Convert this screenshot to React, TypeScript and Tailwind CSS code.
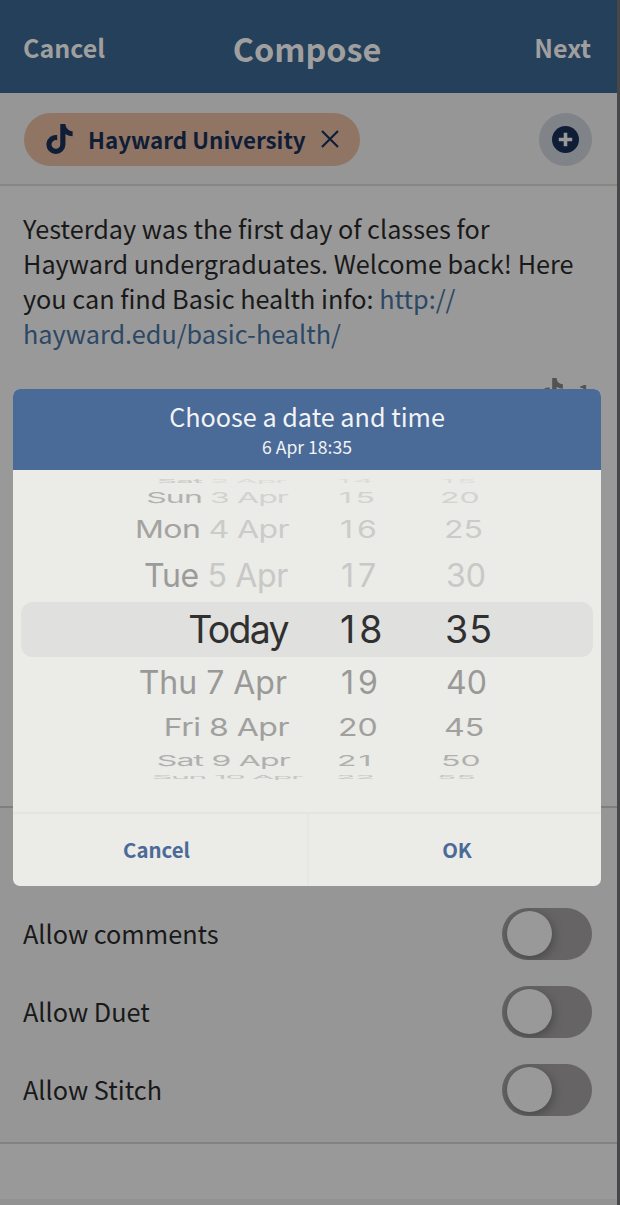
import clsx from "clsx";
import { FaTiktok } from "react-icons/fa6";

const wheelRows = [
  { day: "Sat", date: "2 Apr", hour: "14", minute: "15", height: "h-[6px]", squash: "scale-y-[0.17]", tracking: "tracking-[-1.2px]", dayColor: "text-[#c9c9c7]", color: "text-[#dcdcda]", dateShift: "mr-[3px]", hourShift: "-ml-[2px] tracking-[3px]", minuteShift: "-ml-[5px] tracking-[3px]" },
  { day: "Sun", date: "3 Apr", hour: "15", minute: "20", height: "h-[27px]", squash: "scale-y-[0.47]", tracking: "tracking-[-0.9px]", dayColor: "text-[#b2b2b0]", color: "text-[#d2d2d0]", dateShift: "mr-px", hourShift: "tracking-[3.5px]", minuteShift: "-ml-[6px]" },
  { day: "Mon", date: "4 Apr", hour: "16", minute: "25", height: "h-[38px]", squash: "scale-y-[0.77]", tracking: "tracking-[-0.6px]", dayColor: "text-[#a3a3a2]", color: "text-[#cbcbc9]", dateShift: "", hourShift: "ml-px tracking-[4px]", minuteShift: "-ml-[2px]" },
  { day: "Tue", date: "5 Apr", hour: "17", minute: "30", height: "h-[53px]", squash: "", tracking: "tracking-[-0.35px]", dayColor: "text-[#9b9b9a]", color: "text-[#c8c8c6]", dateShift: "mr-px", hourShift: "ml-[2px] tracking-[4px]", minuteShift: "" },
  { day: "Today", date: "", hour: "18", minute: "35", height: "h-[55px]", squash: "", tracking: "tracking-[-1.7px]", dayColor: "text-[#303030]", color: "text-[#303030]", dateShift: "mr-px", hourShift: "ml-px tracking-[4px]", minuteShift: "-ml-px tracking-[1px]" },
  { day: "Thu", date: "7 Apr", hour: "19", minute: "40", height: "h-[51px]", squash: "", tracking: "", dayColor: "text-[#999998]", color: "text-[#999998]", dateShift: "mr-[2px]", hourShift: "ml-[2px] tracking-[4px]", minuteShift: "" },
  { day: "Fri", date: "8 Apr", hour: "20", minute: "45", height: "h-[40px]", squash: "scale-y-[0.77]", tracking: "tracking-[-0.5px]", dayColor: "text-[#a0a09f]", color: "text-[#a0a09f]", dateShift: "", hourShift: "-ml-px", minuteShift: "-ml-[2px]" },
  { day: "Sat", date: "9 Apr", hour: "21", minute: "50", height: "h-[25px]", squash: "scale-y-[0.47]", tracking: "tracking-[-0.8px]", dayColor: "text-[#b0b0ae]", color: "text-[#b0b0ae]", dateShift: "-mr-px", hourShift: "-ml-[2px] tracking-[2px]", minuteShift: "-ml-[5px]" },
  { day: "Sun", date: "10 Apr", hour: "22", minute: "55", height: "h-[8px]", squash: "scale-y-[0.17]", tracking: "tracking-[-1.3px]", dayColor: "text-[#c6c6c4]", color: "text-[#c6c6c4]", dateShift: "-mr-[13px]", hourShift: "-ml-[3px]", minuteShift: "-ml-[9px]" },
];

const options = ["Allow comments", "Allow Duet", "Allow Stitch"];

function Toggle() {
  return (
    <div className="h-[52px] w-[90px] overflow-hidden rounded-full bg-[#666465] py-[3px] pl-[5px]">
      <div className="size-[45px] rounded-full bg-[#999] shadow-[1px_3px_8px_1px_rgba(60,60,60,0.6)]" />
    </div>
  );
}

function WheelRow({ row }: { row: (typeof wheelRows)[number] }) {
  const selected = row.day === "Today";

  return (
    <div
      className={clsx(
        "flex shrink-0 items-center whitespace-nowrap font-['Inter',sans-serif]",
        row.height,
        selected
          ? "rounded-[12px] bg-[#e0e0df] text-[37.5px] leading-[54px]"
          : "text-[32px] leading-[40px]",
        row.color,
      )}
    >
      <div className="flex w-[268px] shrink-0 justify-end">
        <span className={clsx("block whitespace-pre", row.squash, row.tracking, row.dateShift)}>
          <span className={row.dayColor}>{row.day}</span>
          {row.date && ` ${row.date}`}
        </span>
      </div>
      <div className="flex w-[105px] shrink-0 pl-[50px]">
        <span className={clsx("block", row.squash, row.hourShift)}>{row.hour}</span>
      </div>
      <div className="flex pl-[52px]">
        <span className={clsx("block", row.squash, row.minuteShift)}>{row.minute}</span>
      </div>
    </div>
  );
}

function DateTimeDialog() {
  return (
    <div className="absolute top-[389px] left-[13px] flex h-[497px] w-[588px] flex-col overflow-hidden rounded-[7px] bg-[#ebebe7]">
      <div className="flex h-[81px] flex-col items-center bg-[#4a6a98] pt-[10px] text-[#f2f3f5]">
        <h2 className="text-[25.2px] leading-[34px]">Choose a date and time</h2>
        <p className="mt-px text-[17.6px] leading-[26px]">6 Apr 18:35</p>
      </div>

      <div className="flex h-[342px] flex-col px-[8px] pt-[8px]">
        {wheelRows.map((row) => (
          <WheelRow key={row.day + row.date} row={row} />
        ))}
      </div>

      <div className="grid flex-1 grid-cols-[296px_1fr] border-t-2 border-[#e4e4e1] pb-px text-[20.4px] font-bold text-[#4a6a98]">
        <button className="border-r-2 border-[#e6e6e3] pr-[7px]">Cancel</button>
        <button className="pl-[4px]">OK</button>
      </div>
    </div>
  );
}

export default function App() {
  return (
    <div className="relative h-[1205px] w-[620px] overflow-hidden border-r-[3px] border-[#47474a] bg-[#999] font-['Noto_Sans_CJK_SC',sans-serif] text-[#191919]">
      <header className="grid h-[93px] grid-cols-[1fr_auto_1fr] items-center bg-[#25405a] pt-[3px] pr-[26px] pl-[23px] text-[25px] font-bold text-[#a09f9f]">
        <span>Cancel</span>
        <h1 className="text-[32.4px]">Compose</h1>
        <span className="text-right">Next</span>
      </header>

      <div className="flex h-[93px] items-center justify-between border-b-2 border-[#868683] bg-[#969696] pt-px pr-[25px] pl-[24px]">
        <div className="flex h-[53px] w-[336px] items-center rounded-full bg-[#907565] pl-[22px] text-[#101d36]">
          <FaTiktok className="h-[30px] w-[27px]" />
          <span className="ml-[15px] w-[218px] text-[22.4px] leading-[36px] font-bold whitespace-nowrap">Hayward University</span>
          <svg className="ml-[15px] size-[18px]" viewBox="0 0 18 18" fill="none" stroke="currentColor" strokeWidth="2.2">
            <path d="M1 1l16 16M17 1L1 17" />
          </svg>
        </div>
        <div className="flex size-[53px] items-center justify-center rounded-full bg-[#808388]">
          <svg className="size-[27px]" viewBox="0 0 27 27">
            <circle cx="13.5" cy="13.5" r="13.5" fill="#101d36" />
            <path d="M13.5 6.8v13.4M6.8 13.5h13.4" stroke="#999" strokeWidth="3.6" />
          </svg>
        </div>
      </div>

      <div className="h-[622px] border-b-2 border-[#7f7f7f] px-[23px] pt-[25px]">
        <p className="text-[25.25px] leading-[35px] whitespace-nowrap">
          Yesterday was the first day of classes for
          <br />
          Hayward undergraduates. Welcome back! Here
          <br />
          you can find Basic health info: <a className="text-[#2c4865]">http://</a>
          <br />
          <a className="text-[#2c4865]">hayward.edu/basic-health/</a>
        </p>
        <div className="mt-[27px] flex items-start justify-end gap-[15px] pr-[4px] text-[#535353]">
          <FaTiktok className="h-[26px] w-[23px]" />
          <span className="mt-px text-[20px] leading-[26px] font-bold">1</span>
        </div>
      </div>

      <div className="flex h-[336px] flex-col gap-[26px] border-b-2 border-[#828282] bg-[#969696] px-[23px] pt-[100px] pr-[25px]">
        {options.map((option) => (
          <div key={option} className="flex h-[52px] items-center justify-between text-[25.25px]">
            <span>{option}</span>
            <Toggle />
          </div>
        ))}
      </div>
      <div className="h-[55px]" />
      <div className="h-[6px] bg-[#929292]" />

      <DateTimeDialog />
    </div>
  );
}
